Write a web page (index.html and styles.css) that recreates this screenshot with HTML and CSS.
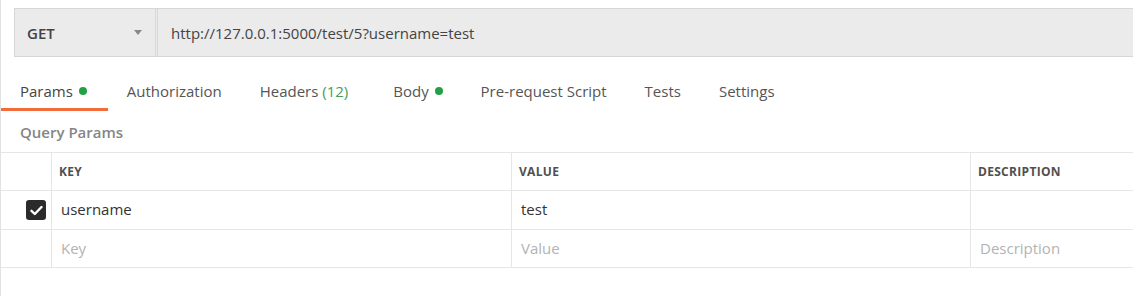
FILE: index.html
```html
<!DOCTYPE html>
<html>
<head>
<meta charset="utf-8">
<link rel="stylesheet" href="styles.css">
</head>
<body>
<div class="page">
  <div class="request-bar">
    <div class="method">
      <span class="method-name">GET</span>
      <span class="caret"></span>
    </div>
    <div class="url">http://127.0.0.1:5000/test/5?username=test</div>
  </div>

  <div class="tabs">
    <div class="tab active">Params <span class="dot"></span></div>
    <div class="tab">Authorization</div>
    <div class="tab tab-headers">Headers <span class="count">(12)</span></div>
    <div class="tab">Body <span class="dot"></span></div>
    <div class="tab">Pre-request Script</div>
    <div class="tab">Tests</div>
    <div class="tab">Settings</div>
  </div>

  <div class="section-title">Query Params</div>

  <div class="table">
    <div class="row head">
      <div class="cell check"></div>
      <div class="cell">KEY</div>
      <div class="cell">VALUE</div>
      <div class="cell">DESCRIPTION</div>
    </div>
    <div class="row filled">
      <div class="cell check">
        <span class="checkbox">
          <svg width="13" height="11" viewBox="0 0 13 11"><path d="M1.5 5.8 L4.8 9 L11.5 2" fill="none" stroke="#fff" stroke-width="2.4" stroke-linecap="round" stroke-linejoin="round"/></svg>
        </span>
      </div>
      <div class="cell">username</div>
      <div class="cell">test</div>
      <div class="cell"></div>
    </div>
    <div class="row placeholder">
      <div class="cell check"></div>
      <div class="cell">Key</div>
      <div class="cell">Value</div>
      <div class="cell">Description</div>
    </div>
  </div>
</div>
</body>
</html>
```

FILE: styles.css
```css
* { box-sizing: border-box; }
html, body { margin: 0; padding: 0; background: #fff; }
body {
  font-family: "Open Sans", "Liberation Sans", sans-serif;
  color: #333;
  width: 1133px;
  height: 296px;
  overflow: hidden;
}
.page {
  border-left: 1px solid #e2e2e2;
  height: 296px;
  padding-top: 8px;
}
.request-bar {
  margin-left: 13px;
  height: 49px;
  display: flex;
  background: #ebebeb;
  border: 1px solid #d6d6d6;
  border-right: none;
}
.method {
  width: 141px;
  display: flex;
  align-items: center;
  justify-content: space-between;
  padding: 0 13px 0 12px;
  border-right: 1px solid #d8d8d8;
  margin-right: 1px;
}
.method-name {
  font-size: 15px;
  font-weight: 600;
  color: #444;
}
.caret {
  width: 0; height: 0;
  border-left: 4px solid transparent;
  border-right: 4px solid transparent;
  border-top: 5px solid #888;
}
.url {
  flex: 1;
  border-left: 1px solid #d8d8d8;
  display: flex;
  align-items: center;
  padding-left: 13px;
  font-size: 15px;
  color: #444;
}
.tabs {
  display: flex;
  margin-top: 17px;
}
.tab {
  height: 37px;
  display: flex;
  align-items: center;
  padding: 0 19px;
  font-size: 15px;
  color: #555;
  border-bottom: 3px solid transparent;
  white-space: pre;
}
.tab.active {
  padding-left: 19px;
  padding-right: 21px;
  border-bottom-color: #f26b3a;
  color: #444;
}
.tab-headers { padding-right: 26px; }
.dot {
  display: inline-block;
  width: 8px; height: 8px;
  border-radius: 50%;
  background: #22a045;
  margin-left: 2px;
}
.count { color: #3f9e58; }
.section-title {
  padding: 11px 0 10px 19px;
  font-size: 15px;
  line-height: 20px;
  font-weight: 600;
  color: #858585;
}
.table {
  border-top: 1px solid #e6e6e6;
}
.row {
  display: grid;
  grid-template-columns: 50px 460px 459px 1fr;
  height: 38px;
  border-bottom: 1px solid #e6e6e6;
}
.row.filled { height: 39px; }
.cell {
  display: flex;
  align-items: center;
  padding-left: 9px;
  padding-bottom: 2px;
  font-size: 15px;
  color: #333;
  border-left: 1px solid #e6e6e6;
}
.cell.check { border-left: none; padding-left: 25px; padding-bottom: 0; }
.head .cell {
  font-size: 12px;
  font-weight: 700;
  color: #505050;
  padding-left: 7px;
  padding-bottom: 0;
  letter-spacing: 0.3px;
}
.placeholder .cell { color: #b3b3b3; }
.checkbox {
  width: 20px; height: 20px;
  border-radius: 3px;
  background: #2b2b2b;
  display: flex;
  align-items: center;
  justify-content: center;
}
```
